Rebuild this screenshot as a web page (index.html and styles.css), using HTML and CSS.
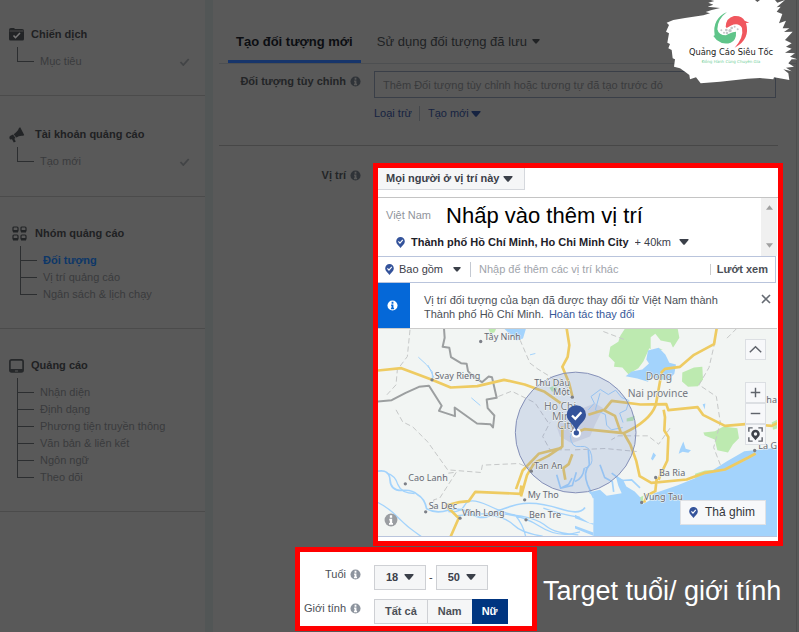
FILE: index.html
```html
<!DOCTYPE html>
<html lang="vi">
<head>
<meta charset="utf-8">
<meta name="viewport" content="width=device-width, initial-scale=1">
<title>Đối tượng</title>
<link rel="stylesheet" href="styles.css">
</head>
<body>
<svg class="defs" aria-hidden="true">
  <symbol id="caret" viewBox="0 0 10 6"><path d="M1 0h8q1 0 .5 1L6 5.300q-1 1-2 0L.5 1Q0 0 1 0z" fill="currentColor"/></symbol>
  <symbol id="info" viewBox="0 0 12 12"><circle cx="6" cy="6" r="5.500" fill="currentColor"/><path d="M5 2h2v2H5zM4.500 5H7v3.500h.7V10H4.300V8.500H5v-2h-.5z" class="info-mark"/></symbol>
  <symbol id="pin" viewBox="0 0 10 12"><path d="M5 0a4.800 4.800 0 0 1 4.800 4.800C9.800 7.500 7 9 5 12 3 9 .2 7.500.2 4.800A4.800 4.800 0 0 1 5 0z" fill="#34539b"/><path d="M2.700 4.800l1.700 1.800 3.100-3.400" fill="none" stroke="#fff" stroke-width="1.300"/></symbol>
  <symbol id="tick" viewBox="0 0 10 8"><path d="M1 4l2.800 3L9.200 1" fill="none" stroke="currentColor" stroke-width="1.800"/></symbol>
</svg>
<div class="page">
  <nav class="sidebar">
    <section class="step first">
      <h2><svg viewBox="0 0 15 13" width="15" height="13"><path d="M0 2q0-2 2-2h3l1 1h7q2 0 2 1.500V11q0 1.500-1.500 1.500h-12Q0 12.500 0 11z" fill="#222426"/><path d="M.5 3h14" stroke="#595959" stroke-width=".7"/><path d="M4.500 7.500l2 2.200L11 5" fill="none" stroke="#777" stroke-width="1.600"/></svg>Chiến dịch</h2>
      <ul><li><a href="#">Mục tiêu</a><svg class="done"><use href="#tick"/></svg></li></ul>
    </section>
    <section class="step account">
      <h2><svg viewBox="0 0 16 16" width="16" height="16"><path d="M10 1l1.200-.8 4 7.800-1 .8c-3-.5-5 .6-7 1.700L4.700 7.200C7 5.500 9 4 10 1zM1 9l3-1.500L6.500 11l-1.200.8 1.500 2.700-2 1-1.800-3.200-1.600.2Q-.4 11 1 9z" fill="#222426"/></svg>Tài khoản quảng cáo</h2>
      <ul><li><a href="#">Tạo mới</a><svg class="done"><use href="#tick"/></svg></li></ul>
    </section>
    <section class="step group">
      <h2><svg viewBox="0 0 15 15" width="15" height="15"><g fill="none" stroke="#222426" stroke-width="1.200"><rect x="1" y="1" width="5" height="4.500" rx="1"/><rect x="9" y="1" width="5" height="4.500" rx="1"/><rect x="1" y="9" width="5" height="4.500" rx="1"/><rect x="9" y="9" width="5" height="4.500" rx="1"/></g><path d="M1 4h5v2.500H1zM9 4h5v2.500H9zM1 12h5v2.500H1zM9 12h5v2.500H9z" fill="#222426"/></svg>Nhóm quảng cáo</h2>
      <ul><li class="current"><a href="#">Đối tượng</a></li><li><a href="#">Vị trí quảng cáo</a></li><li><a href="#">Ngân sách &amp; lịch chạy</a></li></ul>
    </section>
    <section class="step">
      <h2><svg viewBox="0 0 15 14" width="15" height="14"><rect x=".9" y=".9" width="13.200" height="12" rx="1.800" fill="none" stroke="#26282a" stroke-width="1.700"/><path d="M1 10h13v3H1z" fill="#26282a"/><path d="M6 12h3" stroke="#595959"/></svg>Quảng cáo</h2>
      <ul><li><a href="#">Nhận diện</a></li><li><a href="#">Định dạng</a></li><li><a href="#">Phương tiện truyền thông</a></li><li><a href="#">Văn bản &amp; liên kết</a></li><li><a href="#">Ngôn ngữ</a></li><li><a href="#">Theo dõi</a></li></ul>
    </section>
  </nav>

  <main class="content">
    <div class="tabs">
      <button class="tab active" type="button">Tạo đối tượng mới</button>
      <button class="tab" type="button">Sử dụng đối tượng đã lưu <svg class="caret small"><use href="#caret"/></svg></button>
    </div>

    <div class="field audience">
      <label class="label" for="audience">Đối tượng tùy chỉnh <svg class="info"><use href="#info"/></svg></label>
      <div>
        <input id="audience" class="audience-input" type="text" placeholder="Thêm Đối tượng tùy chỉnh hoặc tương tự đã tạo trước đó">
        <div class="links"><a href="#">Loại trừ</a><a href="#">Tạo mới <svg class="caret"><use href="#caret"/></svg></a></div>
      </div>
    </div>

    <div class="field location">
      <label class="label" for="people">Vị trí <svg class="info"><use href="#info"/></svg></label>
      <div class="highlight">
        <span class="select people"><select id="people"><option>Mọi người ở vị trí này</option></select><svg class="caret"><use href="#caret"/></svg></span>
        <div class="places">
          <div class="places-list">
            <div class="country"><span>Việt Nam</span><strong>Nhấp vào thêm vị trí</strong></div>
            <div class="city"><svg class="pin"><use href="#pin"/></svg><b>Thành phố Hồ Chí Minh, Ho Chi Minh City</b><span class="select radius"><select aria-label="Bán kính"><option>+ 40km</option></select><svg class="caret"><use href="#caret"/></svg></span></div>
          </div>
          <div class="scroll"><svg viewBox="0 0 8 5"><path d="M0 5l4-5 4 5z"/></svg><svg viewBox="0 0 8 5"><path d="M0 0l4 5 4-5z"/></svg></div>
        </div>
        <div class="search">
          <svg class="pin"><use href="#pin"/></svg>
          <span class="select include"><select aria-label="Bao gồm hoặc loại trừ"><option>Bao gồm</option></select><svg class="caret small"><use href="#caret"/></svg></span>
          <input type="text" aria-label="Vị trí" placeholder="Nhập để thêm các vị trí khác">
          <button type="button">Lướt xem</button>
        </div>
        <div class="notice">
          <div class="notice-icon"><svg class="info"><use href="#info"/></svg></div>
          <p>Vị trí đối tượng của bạn đã được thay đổi từ Việt Nam thành Thành phố Hồ Chí Minh. <a href="#">Hoàn tác thay đổi</a></p>
          <button type="button" aria-label="Đóng"><svg viewBox="0 0 10 10" width="10" height="10"><path d="M1 1l8 8M9 1L1 9" stroke="#666b73" stroke-width="1.600"/></svg></button>
        </div>
        <div class="map">
          <svg class="map-art" viewBox="24 6 1197 624" preserveAspectRatio="xMidYMid slice">
            <rect x="24" y="6" width="1197" height="624" fill="#f2f5f3"/>
            <g fill="#bdeab0">
              <path d="M355 6h24l-6 12-12 2z"/><path d="M538 184l18-8 6 14-16 6z"/>
              <path d="M765 6h158l5 28-18 28-25 3-25 10-22-10-18 40-15 20-30 18-18-20-25-2 2-14-18-18 5-28 24-15 6-18z"/>
              <path d="M937 138l35-15 25-2 2 38-15 20-30 2-18-16z"/>
              <path d="M1000 318l35-4 25-14 42 5 5 30-18 18-15 25-32-7-8-32-30-12z"/>
              <path d="M975 442l30-10 30-2-4 15-30 20-25-4zM770 276l25-8-5 15-20 2zM1205 288l16-8v26l-12 4zM805 515l15-8-2 25-10 5z"/>
            </g>
            <path d="M842 32l14-10 16 20 30 6 8 18-20 6-22-6-14 12-12-12z" fill="#f2f5f3"/>
            <g fill="#a3d3fc">
              <path d="M402 6h66l-9 30-20 6-18-18zM834 72l32-8 20 20 12 25 20 5-5 28-20 20-35-6-14-10-10 20-32-10-35-7 18-14 32-6 20-18-8-12z"/>
              <path d="M670 630V510l-15-12 35-8 20 18 45-8-10-22-8-30 22 12 10 20 25 15 17 18 4 22 28-15 6-18 72-25 95-38 55-35 52-30 98-10V630z"/>
              <path d="M615 565l55 22v8l-55-20zM615 598l55 20v10l-55-22z"/>
              <path d="M940 345l7 22 16 4-8 8-17-3-12 6 4-14zM998 233l8-2-2 18zM850 378l8 8-10 16-5-5z"/>
            </g>
            <path d="M610 510v50l50 30h10v-82l-25-15z" fill="#f2f5f3"/>
            <path d="M560 300l40-40 75-30 25 15-25 50-15 35-55 20-35-20z" fill="#d7d9df" opacity=".7"/>
            <g fill="none" stroke="#a3d3fc" stroke-width="5" stroke-linejoin="round">
              <path d="M24 434q34-6 36 26t34 32q32-4 48 12 22 12 28 43 28 16 64 4 40-10 70 12 42 22 70-6 54-22 86-26 50-4 110 16t75-4"/>
              <path d="M50 440q25 6 34 35 10 26 50 26M24 528q30 14 60 45t70 57M235 555q38 5 50-20t70 2 80 28q25 30 32 65M255 568q70-8 135-6t120 38 120 16M350 565q55 5 80 30t88 34M420 565q75 5 110 35 24 20 95 25M520 545q50 18 110 28" stroke-width="4"/>
              <path d="M145 92q28 23 42 44v22M174 116l18 38M304 214l27 23M480 85l16-4" stroke-width="3"/>
              <path d="M655 370l3 45q-20 24-5 60l18 40M690 415l14 38 23 13 4 30M725 440l30 22 30-2 25 24M560 445l12 40 24-12 10-18M572 485l35-8 12-40M615 465q24-8 28-40"/>
              <path d="M643 425q28-4 22-37t-34-28-30-31l16-30M655 250l18-20-10-20 28-21 24 15 22-13 18 22 22 9-8 28-20 10 10 28M690 200l-14 50 30 14 4 32 14 14 34-7" stroke-width="3"/>
            </g>
            <g fill="none" stroke="#c6c8c8" stroke-width="3" stroke-dasharray="16 9">
              <path d="M120 10l-8 80-30 40-4 45-32 35M78 250l20 36 30 15 45 45 60 84 100 8 4-22 110-5 40 18M235 440l24-3-50 78-18 5 2 25M450 40l30 70 24 18 90 55M600 370l-60 0-22-40 22-42M385 210l40-16 70 35 40 60"/>
              <path d="M1035 45l-18 78-30 52 52 35 12 78-20 75 20 52M900 305l-34 48-32-25-90 0-20 12M615 370l90-4 95 9M1100 6l-30 30M700 15l65 25"/>
            </g>
            <g fill="none" stroke="#9c9fa0" stroke-width="6" stroke-linejoin="round"><path d="M222 6l2 28-6 27 20 3 5 28 30 18 17 2 4 22 14 15 28 18 20-17 10 2 14 62-30 5 3 26 20 22-4 36-8-10-40-2-67-48 1 26-48-16 8-15-38-60-30 3-40 18-42 22-45 4"/></g>
            <g fill="none" stroke="#eecb62" stroke-width="8" stroke-linejoin="round">
              <path d="M24 132l70-7 90 34 58 24 80-4 80-19 62 14 60 22 48 34M590 6l8 50-5 35-16 30 20 48 10 40M577 300v60l-42 28-42 21-22 37-18 64M438 488l20-56 48-50 70-18M242 630l24-55-28-28-10-10 40-10 28-3 20-28 135 6 3-25M586 460l-6-35 16-12 11-30"/>
              <path d="M1040 6l-8 47-60 32-42 36-45 6-10 10-18 100M655 265l48-15 22-27 86 11 78-1 6 18 88-9 16 23 66 33 70-6 70 6 36-18M700 250l35 18 18 52M881 250l4 22-2 40 12 20-3 70-22 46-4 12M857 236q-18 48-96 84l-118-12-30 12M761 320l20 34 18 50 10 45 35 20 106-10 55-20 60-10 70-36 22-12M860 456l-4 38-24 12-10 22"/>
            </g>
            <circle cx="617" cy="318" r="181" fill="#6482c8" fill-opacity=".2" stroke="#8590b8" stroke-width="3"/>
            <g class="places-text">
              <text x="343" y="39">Tây Ninh</text><text x="194" y="156">Svay Rieng</text><text x="493" y="178">Thủ Dầu</text><text x="549" y="205">Một</text>
              <text x="492" y="427">Tan An</text><text x="115" y="464">Cao Lanh</text><text x="176" y="548">Sa Dec</text><text x="276" y="568">Vĩnh Long</text><text x="473" y="515">My Tho</text><text x="477" y="573">Ben Tre</text>
              <text x="867" y="447">Ba Ria</text><text x="821" y="521">Vung Tau</text><text x="1189" y="229">ha</text><text x="1165" y="366">La Gi</text>
              <g class="large"><text x="522" y="249">Ho Chi</text><text x="546" y="279">Minh</text><text x="562" y="307">City</text><text x="827" y="161">Dong</text><text x="773" y="210">Nai province</text></g>
            </g>
            <g fill="#7d8088"><circle cx="332" cy="45" r="5"/><circle cx="186" cy="160" r="5"/><circle cx="607" cy="212" r="5"/><circle cx="484" cy="434" r="5"/><circle cx="106" cy="472" r="5"/><circle cx="167" cy="556" r="5"/><circle cx="270" cy="575" r="5"/><circle cx="464" cy="520" r="5"/><circle cx="468" cy="580" r="5"/><circle cx="857" cy="453" r="5"/><circle cx="815" cy="528" r="5"/><circle cx="1154" cy="372" r="5"/></g>
            <circle cx="619" cy="320" r="14" fill="#fff"/>
            <path d="M619 236a29 29 0 0 1 29 29c0 20-21 26-29 49-8-23-29-29-29-49a29 29 0 0 1 29-29z" fill="#34539b"/><circle cx="619" cy="319" r="8" fill="#34539b"/><path d="M606 267l10 10 18-20" fill="none" stroke="#fff" stroke-width="7"/>
          </svg>
          <div class="map-tools">
            <button class="up" type="button" aria-label="Thu gọn"><svg viewBox="0 0 20 20"><path d="M4 13l6-6 6 6"/></svg></button>
            <button type="button" aria-label="Phóng to"><svg viewBox="0 0 20 20"><path d="M5 10h10M10 5v10"/></svg></button>
            <button type="button" aria-label="Thu nhỏ"><svg viewBox="0 0 20 20"><path d="M5 10h10"/></svg></button>
            <button type="button" aria-label="Vị trí của tôi"><svg viewBox="0 0 20 20"><path d="M3 7V3h4M13 3h4v4M17 13v4h-4M7 17H3v-4"/><path class="solid" fill-rule="evenodd" d="M10 5a4.500 4.500 0 0 1 4.500 4.500C14.500 12 12 13.500 10 16c-2-2.500-4.500-4-4.500-6.500A4.500 4.500 0 0 1 10 5zm0 2.700a1.800 1.800 0 1 0 0 3.600 1.800 1.800 0 0 0 0-3.600z"/></svg></button>
          </div>
          <svg class="map-info"><use href="#info"/></svg>
          <button class="drop-pin" type="button"><svg class="pin"><use href="#pin"/></svg>Thả ghim</button>
        </div>
      </div>
    </div>

    <div class="demographics">
      <div class="highlight target">
        <div class="target-row"><label class="label" for="from">Tuổi <svg class="info"><use href="#info"/></svg></label>
          <div class="ages"><span class="select age"><select id="from"><option>18</option></select><svg class="caret"><use href="#caret"/></svg></span><span>-</span><span class="select age"><select aria-label="Tuổi tối đa"><option>50</option></select><svg class="caret"><use href="#caret"/></svg></span></div></div>
        <div class="target-row"><span class="label">Giới tính <svg class="info"><use href="#info"/></svg></span>
          <div class="genders"><button type="button">Tất cả</button><button type="button">Nam</button><button class="chosen" type="button">Nữ</button></div></div>
      </div>
      <p class="caption">Target tuổi/ giới tính</p>
    </div>
  </main>
  <svg class="brand" viewBox="9 0 408 252" width="136" height="84">
    <path d="M152 0L163 3 145 8 160 14 143 20 180 24 155 30 137 36 150 40 130 46 100 50 75 54 40 60 20 68 27 75 18 95 27 100 22 128 30 132 25 145 35 150 38 175 45 178 42 200 60 205 75 215 88 225 90 238 108 232 122 250 180 245 262 236 300 234 340 238 342 232 388 240 385 220 370 208 395 214 378 203 402 200 385 190 395 178 412 178 390 170 405 160 375 158 395 146 378 140 395 130 375 120 398 95 372 96 388 85 368 85 378 62 357 70 367 42 350 35 362 20 350 22 375 0 352 8 345 0 300 0 292 6 285 0z" fill="#fff"/>
    <path d="M201 36Q172 58 172 88 176 106 198 106 208 98 228 95 230 120 212 128 190 136 170 120L160 108 164 106Q156 56 201 36z" fill="#5fc489"/>
    <path d="M197 80Q198 54 222 48 246 46 254 62L268 68 258 69Q272 118 224 143 252 112 246 84 236 66 212 77L200 84z" fill="#f0575e"/>
    <g fill="#c4c6c8"><circle cx="184" cy="91" r="3"/><circle cx="192" cy="98" r="3"/><circle cx="201" cy="99" r="4"/><circle cx="199" cy="90" r="4"/><circle cx="210" cy="92" r="5"/><circle cx="215" cy="84" r="4"/><circle cx="224" cy="80" r="3"/><circle cx="233" cy="88" r="3"/></g>
    <text x="213" y="164" class="brand-name">Quảng Cáo Siêu Tốc</text>
    <text x="213" y="188" class="brand-line">Đồng Hành Cùng Chuyên Gia</text>
  </svg>
</div>
</body>
</html>
```
FILE: styles.css
```css
* { box-sizing: border-box; }
body { margin: 0; background: #595959; font: 11px/17px "Liberation Sans", Arial, sans-serif; color: #37393c; }
button, input, select { font: inherit; color: inherit; margin: 0; padding: 0; border: 0; background: none; border-radius: 0; }
select { appearance: none; }
a { color: inherit; text-decoration: none; }
h2, p, ul { margin: 0; padding: 0; }
svg { flex: none; }
.defs { position: absolute; width: 0; height: 0; }
.page { position: relative; display: grid; grid-template-columns: 213px 1fr; min-height: 100vh; overflow: hidden; }

.caret { width: 10px; height: 6px; }
.caret.small { width: 8px; height: 5px; }
.info { width: 11px; height: 11px; color: #2f3338; }
.info-mark { fill: var(--mark, #595959); }
.pin { width: 9px; height: 11px; }

.sidebar { border-right: 8px solid #525656; }
.step { padding: 28px 0 25px 9px; border-bottom: 1px solid #4b4b4b; }
.step.first { padding-top: 26px; }
.step.account { padding-top: 30px; padding-bottom: 26px; }
.step.group { padding-left: 12px; }
.step h2 { display: flex; align-items: center; gap: 7px; height: 17px; font-size: 11px; color: #1f2123; }
.step.account h2 { gap: 10px; }
.step.group h2 { gap: 8px; }
.step ul { list-style: none; margin-top: 4px; padding-top: 6px; background: linear-gradient(#2c2e30, #2c2e30) 8px 0 / 1px calc(100% - 8px) no-repeat; }
.step li { display: flex; align-items: center; height: 17px; padding: 0 15px 0 8px; color: #393b3d; }
.step li::before { content: ""; width: 17px; height: 1px; margin-right: 6px; background: #2c2e30; }
.step li.current { color: #0d3768; font-weight: bold; }
.done { width: 11px; height: 8px; margin-left: auto; color: #424446; }

.content { border-right: 1px solid #4e4e4e; margin-right: 2px; min-width: 0; }
.tabs { display: flex; gap: 8px; height: 64px; margin-left: 6px; padding-left: 9px; border-bottom: 1px solid #4d4f51; }
.tab { align-self: flex-end; height: 40px; padding: 0 8px; font-size: 13px; display: flex; align-items: center; gap: 5px; color: #202224; border-bottom: 3px solid transparent; }
.tab.active { font-weight: bold; color: #0c0e12; border-bottom-color: #17356b; }
.field { display: grid; grid-template-columns: 148px minmax(0, 1fr); }
.label { display: flex; align-items: center; justify-content: flex-end; gap: 4px; height: 17px; font-weight: bold; color: #232527; }
.audience { gap: 13px; margin-right: 18px; padding: 7px 2px 24px 0; }
.audience .label { margin-top: 2px; }
.audience-input { display: block; width: 100%; height: 27px; padding: 0 8px; border: 1px solid #3a3f48; }
.audience-input::placeholder { color: #393b3d; opacity: 1; }
.links { display: flex; align-items: center; margin-top: 8px; color: #162341; }
.links a { height: 15px; line-height: 15px; }
.links a + a { display: flex; align-items: center; gap: 2px; margin-left: 7px; padding-left: 8px; border-left: 1px solid #45484c; }
.location { gap: 12px; padding-right: 13px; background: linear-gradient(#474747, #474747) 6px 0 / calc(100% - 24px) 1px no-repeat; padding-top: 18px; }
.location .label { margin-top: 4px; }

.highlight { border: 5px solid #f00; background: #fff; --mark: #fff; }
.select { position: relative; display: inline-flex; align-items: center; color: #3b4049; }
.select select { flex: 1; width: 100%; height: 100%; }
.select .caret { position: absolute; right: 11px; pointer-events: none; }
.people { display: flex; width: 147px; height: 22px; padding-left: 8px; background: #f5f6f7; border: solid #d5d8dd; border-width: 0 1px 1px 0; font-weight: bold; }
.places { display: flex; margin-top: 7px; height: 59px; border-top: 1px solid #c4c4c4; padding-right: 1px; }
.places-list { flex: 1; }
.country { display: flex; align-items: center; gap: 15px; height: 35px; padding-left: 8px; color: #90949c; }
.country strong { font-size: 22px; font-weight: normal; color: #000; }
.city { display: flex; align-items: center; height: 18px; padding-left: 18px; gap: 6px; color: #1d2129; }
.radius { width: 54px; height: 17px; }
.radius .caret { right: 0; }
.scroll { display: flex; flex-direction: column; justify-content: space-between; align-items: center; width: 16px; padding: 7px 0 8px; background: #f0f0f0; }
.scroll svg { width: 7px; height: 5px; fill: #a0a0a0; }
.search { display: flex; align-items: center; height: 27px; margin-right: 2px; padding: 0 7px; border: 1px solid #b9c4dc; border-left: 0; }
.include { width: 64px; height: 17px; margin-left: 5px; }
.include .caret { right: 2px; }
.search input { flex: 1; min-width: 0; height: 15px; margin-left: 7px; padding-left: 8px; border-left: 1px solid #c4c9d2; }
.search input::placeholder { color: #a0a4ab; opacity: 1; }
.search button { height: 11px; line-height: 11px; padding-left: 6px; border-left: 1px solid #ccc; color: #4b4f56; font-weight: bold; }
.notice { display: flex; min-height: 45px; }
.notice-icon { display: flex; align-items: center; justify-content: center; width: 32px; padding-right: 4px; background: #0568d8; --mark: #0568d8; }
.notice .info { color: #fff; }
.notice p { flex: 1; padding: 10px 30px 0 14px; line-height: 14px; color: #4b4f56; }
.notice a { margin-left: 2px; color: #365899; }
.notice button { align-self: flex-start; padding: 9px 7px 0 0; }
.map { position: relative; height: 209px; margin: 0 1px 4px 0; border-top: 1px solid #ccc; border-bottom: 1px solid #b9c4dc; }
.map-art { display: block; width: 100%; height: 100%; }
.places-text { font: 27px "Noto Sans", sans-serif; fill: #666a73; stroke: #f2f5f3; stroke-width: 3px; paint-order: stroke; }
.places-text .large { font-size: 31px; fill: #777b84; }
.map-tools { position: absolute; top: 10px; right: 11px; display: flex; flex-direction: column; }
.map-tools button { width: 21px; height: 21px; background: #f7f8fa; border: 1px solid #dcdfe3; }
.map-tools .up { margin-bottom: 22px; }
.map-tools svg { display: block; width: 19px; height: 19px; fill: none; stroke: #5f636b; stroke-width: 1.500; }
.map-tools .solid { fill: #3f434a; stroke: none; }
.map-info { position: absolute; left: 6px; bottom: 9px; width: 14px; height: 14px; color: #9a9da1; }
.drop-pin { position: absolute; right: 11px; bottom: 11px; display: flex; align-items: center; gap: 7px; height: 25px; padding: 0 10px 0 8px; background: #f7f8fa; border: 1px solid #dfe1e5; font-size: 12px; color: #33363b; }

.demographics { display: flex; align-items: center; gap: 6px; margin-left: 82px; padding-top: 1px; }
.target { width: 242px; height: 84px; padding: 12px 0 0; }
.target .label { width: 61px; font-weight: normal; color: #4b4f56; }
.target .info { color: #8d949e; }
.target-row { display: flex; align-items: center; gap: 13px; height: 26px; margin-bottom: 8px; }
.target-row .label { margin-top: -5px; }
.ages { display: flex; align-items: center; gap: 3px; }
.age { width: 52px; height: 25px; padding-left: 11px; border: 1px solid #ced0d4; background: #f5f6f7; font-weight: bold; }
.genders { display: flex; height: 25px; border: 1px solid #ced0d4; background: #f5f6f7; font-weight: bold; color: #4b4f56; }
.genders button { padding: 0 10px; border-right: 1px solid #ced0d4; }
.genders .chosen { margin: -1px; background: #003580; border: 0; color: #fff; }
.caption { flex: 1; padding-top: 4px; font-size: 27px; line-height: 32px; color: #fff; white-space: nowrap; }

.brand { position: absolute; top: 0; right: 0; }
.brand-name { font: 25px "DejaVu Sans", sans-serif; fill: #222; text-anchor: middle; }
.brand-line { font: 12px "DejaVu Sans", sans-serif; fill: #74cf99; text-anchor: middle; }
```
